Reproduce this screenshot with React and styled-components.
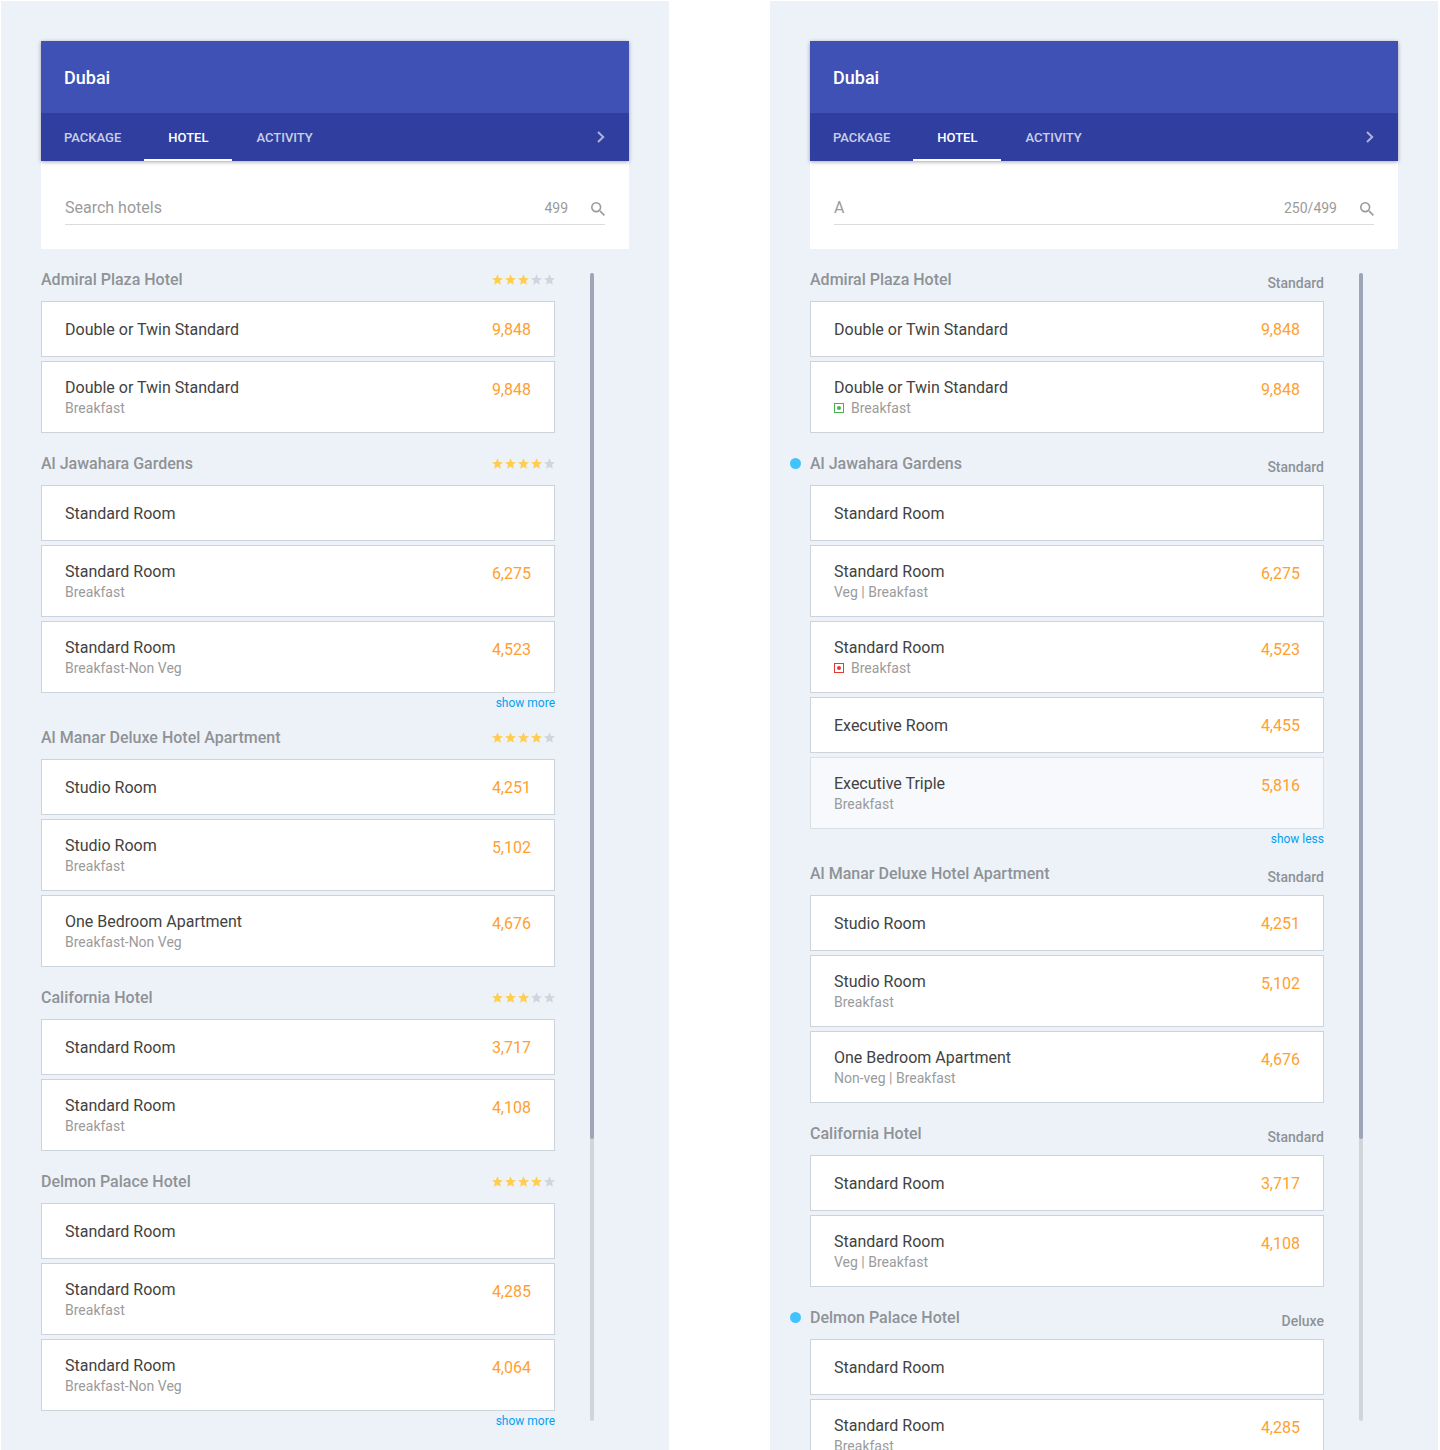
import React from "react";
import styled, { createGlobalStyle } from "styled-components";

const GlobalStyle = createGlobalStyle`
  *, *::before, *::after { box-sizing: border-box; }
  body {
    margin: 0;
    background: #fff;
    font-family: Roboto, "Liberation Sans", sans-serif;
    font-size: 16px;
  }
  button, input { font: inherit; border: 0; padding: 0; background: none; }
  button { cursor: pointer; }
  h1, h2, p, ul { margin: 0; padding: 0; }
  ul { list-style: none; }
`;

const Page = styled.main`
  display: grid;
  grid-template-columns: minmax(0, 1fr) minmax(0, 1fr);
  gap: 101px;
  height: 100vh;
  padding: 1px 2px 0 1px;
`;

const Panel = styled.section`
  display: flex;
  flex-direction: column;
  min-height: 0;
  padding: 40px 40px 0;
  overflow: hidden;
  background: #edf2f9;
`;

const Header = styled.header`
  position: relative;
  color: #fff;
  box-shadow: 0 1px 4px rgba(0, 0, 0, 0.35);
`;

const City = styled.h1`
  padding: 2px 23px 0;
  background: #3f51b5;
  font-size: 18px;
  font-weight: 500;
  line-height: 70px;
`;

const Tabs = styled.nav`
  display: flex;
  height: 48px;
  background: #303f9f;
`;

const Tab = styled.button`
  padding: 2px 24px 0;
  border-bottom: 2px solid ${(p) => (p.$active ? "#fff" : "transparent")};
  color: ${(p) => (p.$active ? "#fff" : "rgba(255, 255, 255, 0.75)")};
  font-size: 13px;
  font-weight: 500;
  text-transform: uppercase;
  &:first-child { padding-right: 23px; padding-left: 23px; }
`;

const NextButton = styled.button`
  display: flex;
  align-items: center;
  margin-left: auto;
  padding: 0 24px;
  color: rgba(255, 255, 255, 0.6);
`;

const SearchBox = styled.form`
  padding: 32px 24px 24px;
  background: #fff;
`;

const SearchRow = styled.div`
  display: flex;
  align-items: center;
  height: 32px;
  padding-bottom: 2px;
  border-bottom: 1px solid #dcdcdc;
  color: #9b9b9b;
`;

const SearchInput = styled.input`
  flex: 1;
  min-width: 0;
  height: 28px;
  outline: 0;
  color: #9b9b9b;
  &::placeholder { color: #9b9b9b; opacity: 1; }
`;

const Count = styled.span`
  font-size: 14px;
`;

const SearchButton = styled.button`
  display: flex;
  margin-left: 23px;
  padding-top: 2px;
  color: #9b9b9b;
`;

const Body = styled.div`
  display: flex;
  flex: 1;
  min-height: 0;
  padding: 24px 35px 0 0;
`;

const Hotels = styled.div`
  display: flex;
  flex: 1;
  flex-direction: column;
  gap: 24px;
  min-width: 0;
`;

const Track = styled.div`
  width: 4px;
  margin: 0 0 29px 35px;
  border-radius: 2px;
  background: #d1d5da;
`;

const Thumb = styled.div`
  height: 75.4%;
  border-radius: 2px;
  background: #9fa5b8;
`;

const HotelHead = styled.div`
  position: relative;
  display: flex;
  justify-content: space-between;
  height: 28px;
`;

const HotelName = styled.h2`
  color: #8f9296;
  font-size: 16px;
  font-weight: 500;
  line-height: 14px;
`;

const Marker = styled.span`
  position: absolute;
  top: 1px;
  left: -20px;
  width: 11px;
  height: 11px;
  border-radius: 50%;
  background: #40c4ff;
`;

const Category = styled.span`
  color: #8f9296;
  font-size: 14px;
  font-weight: 500;
  line-height: 20px;
`;

const Stars = styled.div`
  display: flex;
  gap: 2px;
  padding-top: 1px;
`;

const Rooms = styled.ul`
  display: flex;
  flex-direction: column;
  gap: 4px;
`;

const Room = styled.li`
  display: flex;
  justify-content: space-between;
  min-height: ${(p) => (p.$tall ? 72 : 56)}px;
  padding: 16px 23px 12px;
  border: 1px solid ${(p) => (p.$muted ? "#d9e0e6" : "#cdd3da")};
  background: ${(p) => (p.$muted ? "#f7f9fd" : "#fff")};
`;

const RoomName = styled.p`
  color: #424242;
  line-height: ${(p) => (p.$tall ? 20 : 24)}px;
`;

const Meal = styled.p`
  display: flex;
  align-items: center;
  gap: 7px;
  color: #9b9b9b;
  font-size: 14px;
  line-height: 20px;
`;

const Price = styled.span`
  color: #ffa02f;
  line-height: 24px;
`;

const MoreLink = styled.button`
  display: block;
  height: 14px;
  margin-left: auto;
  padding-top: 3px;
  color: #03a0f0;
  font-size: 12px;
  line-height: 14px;
`;

function Chevron() {
  return (
    <svg width="8" height="12" viewBox="0 0 8 12" fill="none" stroke="currentColor" strokeWidth="2" aria-hidden="true">
      <path d="M1 1l5.2 5L1 11" />
    </svg>
  );
}

function SearchIcon() {
  return (
    <svg width="14" height="14" viewBox="3 3 17.5 17.5" fill="currentColor" aria-hidden="true">
      <path d="M15.5 14h-.79l-.28-.27A6.47 6.47 0 0 0 16 9.5 6.5 6.5 0 1 0 9.5 16c1.61 0 3.09-.59 4.23-1.57l.27.28v.79l5 4.99L20.49 19l-4.99-5zm-6 0C7.01 14 5 11.99 5 9.5S7.01 5 9.5 5 14 7.01 14 9.5 11.99 14 9.5 14z" />
    </svg>
  );
}

function Rating({ value }) {
  return (
    <Stars role="img" aria-label={`${value} of 5 stars`}>
      {[1, 2, 3, 4, 5].map((n) => (
        <svg key={n} width="11" height="11" viewBox="2 2 20 19" fill={n <= value ? "#ffcd50" : "#d0d5dd"}>
          <path d="M12 17.27L18.18 21l-1.64-7.03L22 9.24l-7.19-.61L12 2 9.19 8.63 2 9.24l5.46 4.73L5.82 21z" />
        </svg>
      ))}
    </Stars>
  );
}

function DietMark({ color }) {
  return (
    <svg width="10" height="10" viewBox="0 0 10 10" aria-hidden="true">
      <rect x="0.5" y="0.5" width="9" height="9" fill="none" stroke={color} />
      <circle cx="5" cy="5" r="2" fill={color} />
    </svg>
  );
}

const GREEN = "#4caf50";
const RED = "#e53935";

const leftHotels = [
  { name: "Admiral Plaza Hotel", stars: 3, rooms: [
    { name: "Double or Twin Standard", price: "9,848" },
    { name: "Double or Twin Standard", meal: "Breakfast", price: "9,848" },
  ] },
  { name: "Al Jawahara Gardens", stars: 4, more: "show more", rooms: [
    { name: "Standard Room" },
    { name: "Standard Room", meal: "Breakfast", price: "6,275" },
    { name: "Standard Room", meal: "Breakfast-Non Veg", price: "4,523" },
  ] },
  { name: "Al Manar Deluxe Hotel Apartment", stars: 4, rooms: [
    { name: "Studio Room", price: "4,251" },
    { name: "Studio Room", meal: "Breakfast", price: "5,102" },
    { name: "One Bedroom Apartment", meal: "Breakfast-Non Veg", price: "4,676" },
  ] },
  { name: "California Hotel", stars: 3, rooms: [
    { name: "Standard Room", price: "3,717" },
    { name: "Standard Room", meal: "Breakfast", price: "4,108" },
  ] },
  { name: "Delmon Palace Hotel", stars: 4, more: "show more", rooms: [
    { name: "Standard Room" },
    { name: "Standard Room", meal: "Breakfast", price: "4,285" },
    { name: "Standard Room", meal: "Breakfast-Non Veg", price: "4,064" },
  ] },
];

const rightHotels = [
  { name: "Admiral Plaza Hotel", category: "Standard", rooms: [
    { name: "Double or Twin Standard", price: "9,848" },
    { name: "Double or Twin Standard", meal: "Breakfast", diet: GREEN, price: "9,848" },
  ] },
  { name: "Al Jawahara Gardens", category: "Standard", marked: true, more: "show less", rooms: [
    { name: "Standard Room" },
    { name: "Standard Room", meal: "Veg | Breakfast", price: "6,275" },
    { name: "Standard Room", meal: "Breakfast", diet: RED, price: "4,523" },
    { name: "Executive Room", price: "4,455" },
    { name: "Executive Triple", meal: "Breakfast", price: "5,816", muted: true },
  ] },
  { name: "Al Manar Deluxe Hotel Apartment", category: "Standard", rooms: [
    { name: "Studio Room", price: "4,251" },
    { name: "Studio Room", meal: "Breakfast", price: "5,102" },
    { name: "One Bedroom Apartment", meal: "Non-veg | Breakfast", price: "4,676" },
  ] },
  { name: "California Hotel", category: "Standard", rooms: [
    { name: "Standard Room", price: "3,717" },
    { name: "Standard Room", meal: "Veg | Breakfast", price: "4,108" },
  ] },
  { name: "Delmon Palace Hotel", category: "Deluxe", marked: true, rooms: [
    { name: "Standard Room" },
    { name: "Standard Room", meal: "Breakfast", price: "4,285" },
  ] },
];

function Hotel({ hotel }) {
  return (
    <article>
      <HotelHead>
        {hotel.marked && <Marker />}
        <HotelName>{hotel.name}</HotelName>
        {hotel.stars ? <Rating value={hotel.stars} /> : <Category>{hotel.category}</Category>}
      </HotelHead>
      <Rooms>
        {hotel.rooms.map((room, i) => (
          <Room key={i} $tall={Boolean(room.meal)} $muted={room.muted}>
            <div>
              <RoomName $tall={Boolean(room.meal)}>{room.name}</RoomName>
              {room.meal && (
                <Meal>
                  {room.diet && <DietMark color={room.diet} />}
                  {room.meal}
                </Meal>
              )}
            </div>
            {room.price && <Price>{room.price}</Price>}
          </Room>
        ))}
      </Rooms>
      {hotel.more && <MoreLink type="button">{hotel.more}</MoreLink>}
    </article>
  );
}

function HotelPanel({ id, query, count, hotels }) {
  return (
    <Panel>
      <Header>
        <City>Dubai</City>
        <Tabs>
          <Tab type="button">Package</Tab>
          <Tab type="button" $active aria-current="page">Hotel</Tab>
          <Tab type="button">Activity</Tab>
          <NextButton type="button" aria-label="Next tabs"><Chevron /></NextButton>
        </Tabs>
      </Header>
      <SearchBox onSubmit={(e) => e.preventDefault()}>
        <SearchRow>
          <SearchInput id={id} type="text" aria-label="Search hotels" placeholder="Search hotels" defaultValue={query} />
          <Count>{count}</Count>
          <SearchButton type="submit" aria-label="Search"><SearchIcon /></SearchButton>
        </SearchRow>
      </SearchBox>
      <Body>
        <Hotels>
          {hotels.map((hotel) => <Hotel key={hotel.name} hotel={hotel} />)}
        </Hotels>
        <Track><Thumb /></Track>
      </Body>
    </Panel>
  );
}

export default function App() {
  return (
    <>
      <GlobalStyle />
      <Page>
        <HotelPanel id="search-all" query="" count="499" hotels={leftHotels} />
        <HotelPanel id="search-filtered" query="A" count="250/499" hotels={rightHotels} />
      </Page>
    </>
  );
}
